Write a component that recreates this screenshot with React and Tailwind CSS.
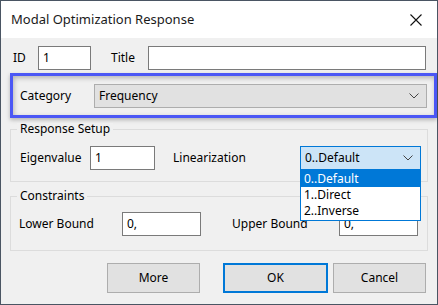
const Chevron = () => (
  <svg width="10" height="6" viewBox="0 0 10 6" className="shrink-0">
    <polyline points="0.5,0.5 5,5 9.5,0.5" fill="none" stroke="#444" strokeWidth="1" />
  </svg>
);

const TextBox = ({ value, className }) => (
  <div className={`flex h-[24px] items-center border border-[#7a7a7a] bg-white pl-[4px] ${className}`}>
    {value}
  </div>
);

export default function App() {
  return (
    <div className="flex h-[305px] w-[438px] flex-col border border-[#4a5563] bg-[#f0f0f0] font-['Noto_Sans',sans-serif] text-[12px] leading-none text-black">
      {/* title bar */}
      <div className="flex h-[37px] shrink-0 items-center justify-between bg-white pl-[10px] pr-[15px]">
        <span className="text-[13px] text-[#1a1a1a]">Modal Optimization Response</span>
        <svg width="12" height="12" viewBox="0 0 12 12">
          <path d="M0.5 0.5 L11.5 11.5 M11.5 0.5 L0.5 11.5" stroke="#111" strokeWidth="1.1" />
        </svg>
      </div>

      {/* ID / Title */}
      <div className="mt-[8px] flex h-[24px] items-center pl-[12px]">
        <span className="w-[25px]">ID</span>
        <TextBox value="1" className="w-[53px]" />
        <span className="ml-[20px] w-[37px]">Title</span>
        <TextBox value="" className="w-[278px]" />
      </div>

      {/* highlighted category */}
      <div className="ml-[9px] mt-[3px] flex h-[45px] w-[427px] items-center border-[3px] border-[#4b57f5] pl-[7px] shadow-[inset_1px_2px_5px_rgba(0,0,0,0.25),0_2px_4px_rgba(0,0,0,0.25)]">
        <span className="w-[74px]">Category</span>
        <div className="flex h-[24px] w-[333px] items-center justify-between border border-[#adadad] bg-[#e1e1e1] pl-[4px] pr-[7px]">
          <span>Frequency</span>
          <Chevron />
        </div>
      </div>

      {/* Response Setup */}
      <div className="relative ml-[9px] mt-[11px] h-[53px] w-[418px] border border-[#dcdcdc] pl-[9px] pt-[16px]">
        <span className="absolute -top-[7px] left-[6px] bg-[#f0f0f0] px-[3px]">Response Setup</span>
        <div className="flex h-[24px] items-center">
          <span className="w-[70px]">Eigenvalue</span>
          <TextBox value="1" className="w-[65px]" />
          <span className="ml-[18px] w-[127px]">Linearization</span>
          <div className="relative w-[121px]">
            <div className="flex h-[24px] items-center justify-between border border-[#0078d7] bg-[#cce4f7] pl-[4px] pr-[7px]">
              <span>0..Default</span>
              <Chevron />
            </div>
            <ul className="absolute left-0 top-full z-10 flex w-[121px] flex-col border border-[#0078d7] bg-white pb-[1px]">
              <li className="flex h-[16px] items-center bg-[#0078d7] pl-[3px] text-white">0..Default</li>
              <li className="flex h-[16px] items-center pl-[3px]">1..Direct</li>
              <li className="flex h-[16px] items-center pl-[3px]">2..Inverse</li>
            </ul>
          </div>
        </div>
      </div>

      {/* Constraints */}
      <div className="relative ml-[9px] mt-[14px] h-[55px] w-[418px] border border-[#dcdcdc] pl-[8px] pt-[15px]">
        <span className="absolute -top-[7px] left-[6px] bg-[#f0f0f0] px-[3px]">Constraints</span>
        <div className="flex h-[24px] items-center">
          <span className="w-[103px]">Lower Bound</span>
          <TextBox value="0," className="w-[79px]" />
          <span className="ml-[31px] w-[107px]">Upper Bound</span>
          <TextBox value="0," className="w-[79px]" />
        </div>
      </div>

      {/* buttons */}
      <div className="mt-[12px] flex pl-[106px]">
        <button className="h-[30px] w-[93px] border border-[#adadad] bg-[#e1e1e1]">More</button>
        <button className="ml-[23px] h-[30px] w-[105px] border-2 border-[#0078d7] bg-[#e1e1e1]">OK</button>
        <button className="ml-[5px] h-[30px] w-[93px] border border-[#adadad] bg-[#e1e1e1]">Cancel</button>
      </div>
    </div>
  );
}
